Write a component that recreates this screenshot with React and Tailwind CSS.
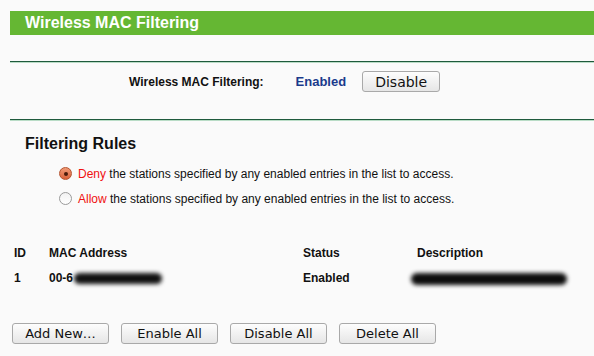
import React from 'react';

const buttons = ['Add New…', 'Enable All', 'Disable All', 'Delete All'];

function Btn({ label, className = '' }) {
  return (
    <button
      className={`h-[21px] rounded-[3px] border border-[#a9a9a9] bg-gradient-to-b from-[#fdfdfd] to-[#e6e6e6] text-[13px] leading-none text-[#111] ${className}`}
      style={{ fontFamily: '"DejaVu Sans", sans-serif' }}
    >
      {label}
    </button>
  );
}

function Radio({ checked }) {
  return checked ? (
    <span className="flex h-[13px] w-[13px] items-center justify-center rounded-full border border-[#b4532f] bg-gradient-to-b from-[#f09a76] to-[#d9623a]">
      <span className="h-[4px] w-[4px] rounded-full bg-[#4a1a0a]" />
    </span>
  ) : (
    <span className="h-[13px] w-[13px] rounded-full border border-[#9a9a9a] bg-gradient-to-b from-[#f2f2f2] to-white" />
  );
}

function Divider() {
  return (
    <div className="ml-[10px]">
      <div className="h-px bg-[#1f5a3c]" />
      <div className="h-px bg-[#b9dcc6]" />
    </div>
  );
}

export default function App() {
  return (
    <div
      className="h-[356px] w-[594px] overflow-hidden bg-[#fafafa] text-[12px] text-[#111]"
      style={{ fontFamily: '"Liberation Sans", Arial, sans-serif' }}
    >
      <div className="ml-[10px] mt-[11px] flex h-[24px] items-center bg-[#65b733] pl-[15px] text-[16px] font-bold text-white">
        Wireless MAC Filtering
      </div>

      <div className="mt-[26px]">
        <Divider />
      </div>

      <div className="h-[56px] pt-[8px]">
        <div className="flex h-[21px] items-center">
          <span className="ml-[129px] font-bold">Wireless MAC Filtering:</span>
          <span className="ml-[32px] text-[13px] font-bold text-[#1a3a8c]">Enabled</span>
          <Btn label="Disable" className="ml-[16px] w-[78px] text-[14px]" />
        </div>
      </div>

      <Divider />

      <div className="ml-[25px] mt-[13px] text-[16px] font-bold leading-[20px]">Filtering Rules</div>

      <div className="ml-[59px] mt-[13px] flex flex-col gap-[12px]">
        <div className="flex h-[13px] items-center gap-[6px]">
          <Radio checked />
          <span>
            <span className="text-[#f01010]">Deny</span> the stations specified by any enabled entries in the list to access.
          </span>
        </div>
        <div className="flex h-[13px] items-center gap-[6px]">
          <Radio />
          <span>
            <span className="text-[#f01010]">Allow</span> the stations specified by any enabled entries in the list to access.
          </span>
        </div>
      </div>

      <div className="mt-[42px] grid grid-cols-[35px_254px_114px_1fr] gap-y-[12px] pl-[14px] font-bold leading-[13px]">
        <span>ID</span>
        <span>MAC Address</span>
        <span>Status</span>
        <span>Description</span>
        <span>1</span>
        <span className="flex items-center">
          00-6
          <span className="ml-[1px] h-[11px] w-[88px] rounded-full bg-[#111] blur-[2px]" />
        </span>
        <span>Enabled</span>
        <span className="-ml-[6px] flex items-center">
          <span className="h-[12px] w-[156px] rounded-full bg-[#0c0c0c] blur-[2px]" />
        </span>
      </div>

      <div className="ml-[12px] mt-[38px] flex gap-[12px]">
        {buttons.map((b) => (
          <Btn key={b} label={b} className="w-[97px]" />
        ))}
      </div>
    </div>
  );
}
